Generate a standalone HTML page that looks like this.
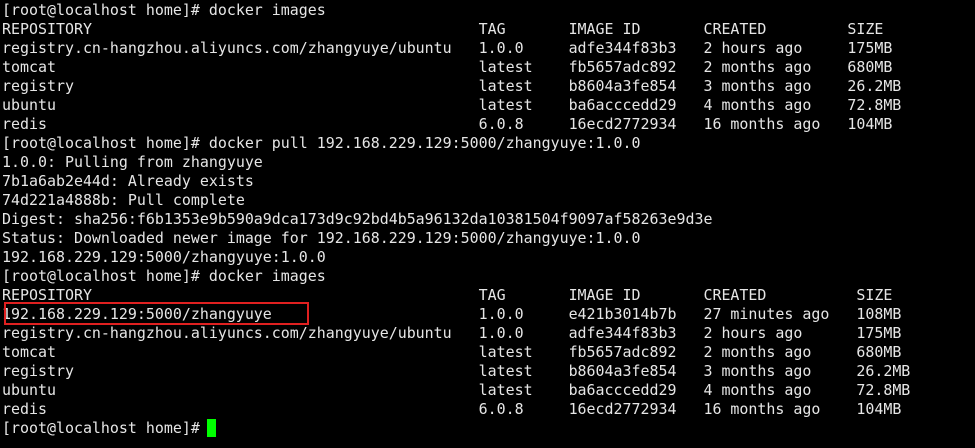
<!DOCTYPE html>
<html><head><meta charset="utf-8"><style>
html,body{margin:0;padding:0;background:#000;width:975px;height:448px;overflow:hidden}
.t{position:absolute;left:2px;top:1px;font-family:"DejaVu Sans Mono","Liberation Mono",monospace;font-size:14.95px;color:#e6e6e6;}
.l{position:relative;height:19px;line-height:19px;white-space:pre;}
.l span{position:absolute;top:0}
.a{left:53ch}.b{left:63ch}.c{left:78ch}.d{left:94ch}.e{left:95ch}
.box{position:absolute;left:4px;top:302px;width:301px;height:19px;border:2px solid #e02020}
.cur{position:absolute;left:207px;top:419px;width:9px;height:18px;background:#00ff00}
</style></head><body>
<div class="t">
<div class="l">[root@localhost home]# docker images</div>
<div class="l">REPOSITORY<span class="a">TAG</span><span class="b">IMAGE ID</span><span class="c">CREATED</span><span class="d">SIZE</span></div>
<div class="l">registry.cn-hangzhou.aliyuncs.com/zhangyuye/ubuntu<span class="a">1.0.0</span><span class="b">adfe344f83b3</span><span class="c">2 hours ago</span><span class="d">175MB</span></div>
<div class="l">tomcat<span class="a">latest</span><span class="b">fb5657adc892</span><span class="c">2 months ago</span><span class="d">680MB</span></div>
<div class="l">registry<span class="a">latest</span><span class="b">b8604a3fe854</span><span class="c">3 months ago</span><span class="d">26.2MB</span></div>
<div class="l">ubuntu<span class="a">latest</span><span class="b">ba6acccedd29</span><span class="c">4 months ago</span><span class="d">72.8MB</span></div>
<div class="l">redis<span class="a">6.0.8</span><span class="b">16ecd2772934</span><span class="c">16 months ago</span><span class="d">104MB</span></div>
<div class="l">[root@localhost home]# docker pull 192.168.229.129:5000/zhangyuye:1.0.0</div>
<div class="l">1.0.0: Pulling from zhangyuye</div>
<div class="l">7b1a6ab2e44d: Already exists</div>
<div class="l">74d221a4888b: Pull complete</div>
<div class="l">Digest: sha256:f6b1353e9b590a9dca173d9c92bd4b5a96132da10381504f9097af58263e9d3e</div>
<div class="l">Status: Downloaded newer image for 192.168.229.129:5000/zhangyuye:1.0.0</div>
<div class="l">192.168.229.129:5000/zhangyuye:1.0.0</div>
<div class="l">[root@localhost home]# docker images</div>
<div class="l">REPOSITORY<span class="a">TAG</span><span class="b">IMAGE ID</span><span class="c">CREATED</span><span class="e">SIZE</span></div>
<div class="l">192.168.229.129:5000/zhangyuye<span class="a">1.0.0</span><span class="b">e421b3014b7b</span><span class="c">27 minutes ago</span><span class="e">108MB</span></div>
<div class="l">registry.cn-hangzhou.aliyuncs.com/zhangyuye/ubuntu<span class="a">1.0.0</span><span class="b">adfe344f83b3</span><span class="c">2 hours ago</span><span class="e">175MB</span></div>
<div class="l">tomcat<span class="a">latest</span><span class="b">fb5657adc892</span><span class="c">2 months ago</span><span class="e">680MB</span></div>
<div class="l">registry<span class="a">latest</span><span class="b">b8604a3fe854</span><span class="c">3 months ago</span><span class="e">26.2MB</span></div>
<div class="l">ubuntu<span class="a">latest</span><span class="b">ba6acccedd29</span><span class="c">4 months ago</span><span class="e">72.8MB</span></div>
<div class="l">redis<span class="a">6.0.8</span><span class="b">16ecd2772934</span><span class="c">16 months ago</span><span class="e">104MB</span></div>
<div class="l">[root@localhost home]# </div>
</div>
<div class="box"></div>
<div class="cur"></div>
</body></html>
